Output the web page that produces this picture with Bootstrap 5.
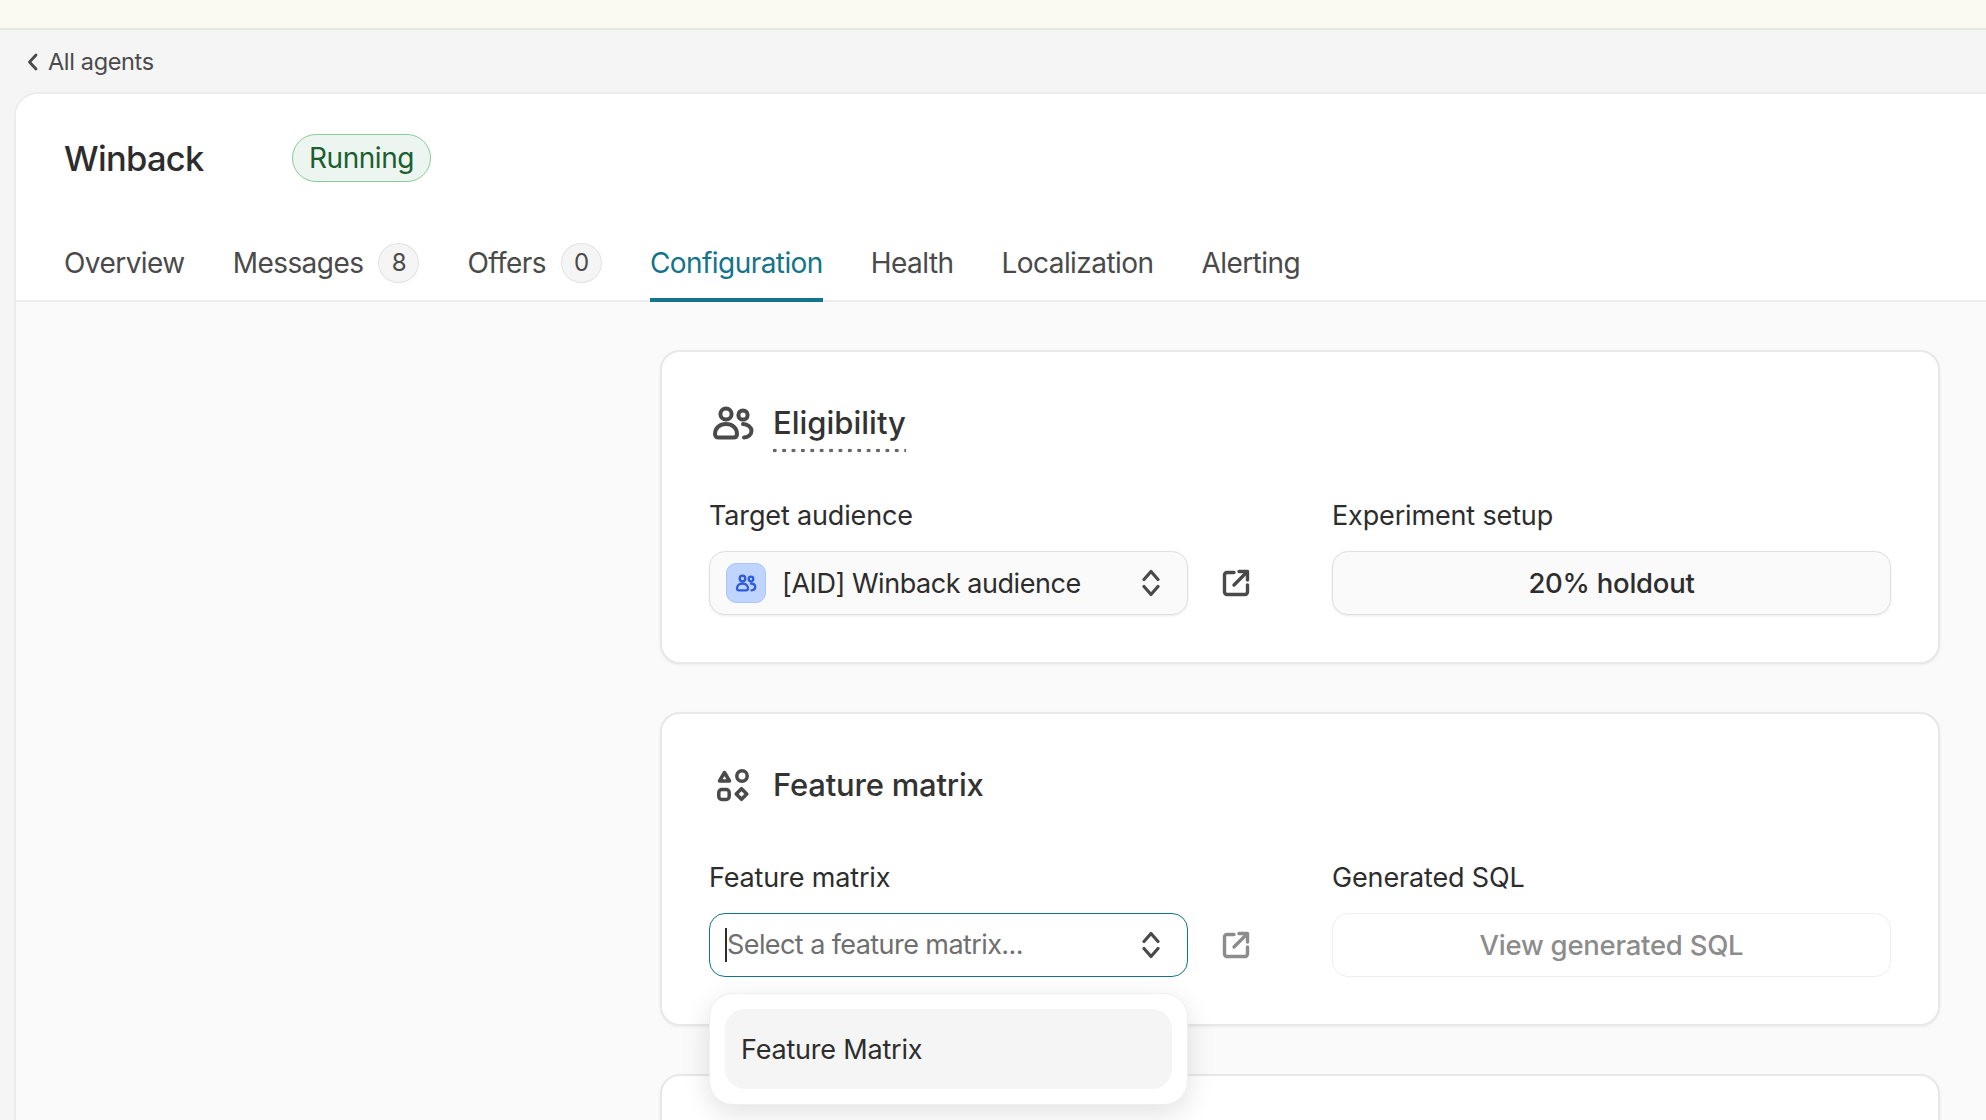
<!DOCTYPE html>
<html lang="en">
    <head>
        <meta charset="UTF-8">
        <meta name="viewport" content="width=device-width, initial-scale=1.0">
        <title>Winback</title>
        <link href="https://cdn.jsdelivr.net/npm/bootstrap@5.3.3/dist/css/bootstrap.min.css" rel="stylesheet">
        <style>
            body {
                height: 1120px;
                overflow: hidden;
                background-color: #f5f5f5;
                font-family: Inter, "Liberation Sans", sans-serif;
                font-size: 26px;
                color: #2d2d2d;
            }
            .top-strip {
                height: 30px;
                background-color: #fafaf2;
                border-bottom: 2px solid #e5e6dc;
            }
            .back-row {
                height: 62px;
                padding-left: 27px;
                padding-top: 2px;
                gap: 10px;
                font-size: 23.5px;
                letter-spacing: -0.35px;
                color: #4a4a4a;
            }
            .agent-panel {
                margin-left: 14px;
                height: 1040px;
                background-color: #fafafa;
                border: 2px solid #ececec;
                border-right: 0;
                border-bottom: 0;
                border-radius: 24px 0 0 0;
                overflow: hidden;
            }
            .agent-head {
                background-color: #fff;
                height: 208px;
                padding: 39px 0 0 48px;
                border-bottom: 2px solid #ececec;
            }
            .agent-name {
                width: 228px;
                padding-top: 2px;
                height: 49px;
                font-size: 34.5px;
                font-weight: 500;
                letter-spacing: -0.7px;
                line-height: 48px;
            }
            .state-pill {
                width: 139px;
                height: 48px;
                border: 1.5px solid #86cf9a;
                border-radius: 24px;
                background-color: #edf5f0;
                color: #1b5e30;
                font-size: 28px;
                letter-spacing: -0.45px;
                line-height: 46px;
                text-align: center;
            }
            .agent-tabs {
                margin-top: 40px;
                gap: 48px;
            }
            .agent-tabs .nav-link {
                height: 80px;
                padding: 5px 0 0;
                color: #4a4a4a;
                font-size: 28px;
                letter-spacing: -0.56px;
                border-bottom: 4px solid transparent;
                display: flex;
                align-items: center;
                gap: 15px;
            }
            .agent-tabs .nav-link.active {
                color: #14748c;
                border-bottom-color: #14748c;
            }
            .count-chip {
                width: 41px;
                height: 40px;
                border: 1.5px solid #e2e2e2;
                border-radius: 50%;
                background-color: #f5f5f5;
                font-size: 24px;
                line-height: 37px;
                text-align: center;
                color: #4a4a4a;
            }
            .config-body {
                padding: 48px 46px 0 644px;
            }
            .section-box {
                height: 314px;
                margin-bottom: 48px;
                padding: 42px 47px 0;
                border: 2px solid #e8e8e8;
                border-radius: 20px;
                box-shadow: 0 1px 3px rgba(0, 0, 0, .06);
            }
            .section-title {
                height: 58px;
                gap: 19px;
                font-size: 31px;
                font-weight: 500;
                letter-spacing: -0.2px;
                color: #333;
            }
            .section-title svg {
                flex: none;
                margin-left: 1px;
            }
            .dotted-word {
                padding-bottom: 7px;
                margin-top: 7px;
                letter-spacing: 0;
                background-image: radial-gradient(circle, #666 1.7px, transparent 2.1px);
                background-size: 9.4px 5px;
                background-repeat: repeat-x;
                background-position: -3px 100%;
            }
            .field-grid {
                display: grid;
                grid-template-columns: 575px 1fr;
                column-gap: 48px;
                margin-top: 46px;
            }
            .field-label {
                font-size: 27px;
                letter-spacing: -0.15px;
                line-height: 36px;
                margin-bottom: 17px;
                color: #2d2d2d;
            }
            .picker-wrap {
                width: 479px;
                position: relative;
            }
            .picker-box {
                height: 64px;
                padding: 0 16px;
                gap: 16px;
                border: 1.5px solid #e0e0e0;
                border-radius: 16px;
                background-color: #fafafa;
                font-size: 27px;
                letter-spacing: -0.45px;
                box-shadow: 0 1px 3px rgba(0, 0, 0, .08);
            }
            .picker-text {
                padding-top: 2px;
            }
            .picker-box.is-focused {
                padding-left: 15px;
                border-color: #14748c;
                background-color: #fff;
                box-shadow: none;
                color: #6f6f6f;
                letter-spacing: -0.58px;
            }
            .text-caret {
                border-left: 2px solid #2d2d2d;
                line-height: 34px;
                white-space: nowrap;
            }
            .audience-tile {
                width: 40px;
                height: 40px;
                flex: none;
                border: 1.5px solid #a9c5fb;
                border-radius: 10px;
                background-color: #bfd5ff;
            }
            .picker-arrows {
                margin-left: auto;
                margin-right: 11px;
                flex: none;
            }
            .open-link {
                margin-left: 34px;
                flex: none;
                color: #4a4a4a;
            }
            .open-link.is-muted {
                color: #8c8c8c;
            }
            .wide-btn {
                height: 64px;
                width: 100%;
                padding-top: 8px;
                border: 1.5px solid #e0e0e0;
                border-radius: 16px;
                background-color: #fafafa;
                font-size: 27.5px;
                font-weight: 500;
                letter-spacing: -0.25px;
                color: #2d2d2d;
                box-shadow: 0 1px 3px rgba(0, 0, 0, .08);
            }
            .wide-btn:disabled {
                border-color: #eeeeee;
                background-color: #fff;
                color: #8c8c8c;
                box-shadow: none;
                opacity: 1;
            }
            .picker-menu {
                position: absolute;
                top: 80px;
                left: 0;
                width: 479px;
                height: 112px;
                padding: 15px;
                border: 1.5px solid #efefef;
                border-radius: 24px;
                background-color: #fff;
                box-shadow: 0 8px 28px rgba(0, 0, 0, .12);
            }
            .picker-menu .dropdown-item {
                height: 80px;
                padding: 2px 16px 0;
                display: flex;
                align-items: center;
                border-radius: 20px;
                background-color: #f5f5f5;
                color: #2d2d2d;
                font-size: 27px;
                letter-spacing: -0.2px;
            }
        </style>
    </head>
    <body>
        <div class="top-strip"></div>
        <div class="back-row d-flex align-items-center">
            <svg width="11" height="18" viewBox="0 0 11 18" fill="none" stroke="#4a4a4a" stroke-width="2.8" stroke-linecap="round" stroke-linejoin="round"><path d="M9 2 2.500 9 9 16"/></svg>
            <span>All agents</span>
        </div>

        <div class="agent-panel">
            <div class="agent-head">
                <div class="d-flex align-items-center">
                    <div class="agent-name">Winback</div>
                    <span class="state-pill">Running</span>
                </div>
                <ul class="nav agent-tabs">
                    <li class="nav-item"><a class="nav-link" href="#">Overview</a></li>
                    <li class="nav-item"><a class="nav-link" href="#">Messages <span class="count-chip">8</span></a></li>
                    <li class="nav-item"><a class="nav-link" href="#">Offers <span class="count-chip">0</span></a></li>
                    <li class="nav-item"><a class="nav-link active" href="#">Configuration</a></li>
                    <li class="nav-item"><a class="nav-link" href="#">Health</a></li>
                    <li class="nav-item"><a class="nav-link" href="#">Localization</a></li>
                    <li class="nav-item"><a class="nav-link" href="#">Alerting</a></li>
                </ul>
            </div>

            <div class="config-body">
                <!-- Eligibility -->
                <div class="section-box bg-white">
                    <div class="section-title d-flex align-items-center">
                        <svg width="44" height="36" viewBox="0 0 44 36" fill="none" stroke="#4a4a4a" stroke-width="4" stroke-linecap="round" stroke-linejoin="round"><circle cx="16" cy="9" r="5.600"/><path d="M5 29c0-6 4.700-10 11-10s11 4 11 10c0 2.400-1.400 3.600-3.600 3.600H8.600C6.400 32.600 5 31.400 5 29z"/><circle cx="33" cy="10" r="4.600"/><path d="M33 19c5 .3 8.500 3.300 8.500 6.800 0 3.700-3.200 6.400-7.500 6.800"/></svg>
                        <span class="dotted-word">Eligibility</span>
                    </div>
                    <div class="field-grid">
                        <div>
                            <div class="field-label">Target audience</div>
                            <div class="d-flex align-items-center">
                                <div class="picker-wrap">
                                    <div class="picker-box d-flex align-items-center">
                                        <span class="audience-tile d-flex align-items-center justify-content-center">
                                            <svg width="22" height="18" viewBox="0 0 44 36" fill="none" stroke="#2f5bdc" stroke-width="4.600" stroke-linecap="round" stroke-linejoin="round"><circle cx="15" cy="9" r="5.600"/><path d="M4 29c0-6 4.700-10 11-10s11 4 11 10c0 2.400-1.400 3.600-3.600 3.600H7.600C5.400 32.600 4 31.400 4 29z"/><circle cx="32" cy="10" r="4.600"/><path d="M32 19c5 .3 8.500 3.300 8.500 6.800 0 3.700-3.200 6.400-7.500 6.800"/></svg>
                                        </span>
                                        <span class="picker-text">[AID] Winback audience</span>
                                        <svg class="picker-arrows" width="18" height="28" viewBox="0 0 18 28" fill="none" stroke="#4a4a4a" stroke-width="3.200" stroke-linecap="round" stroke-linejoin="round"><path d="M2 10.500 9 2.500l7 8"/><path d="M2 17.500l7 8 7-8"/></svg>
                                    </div>
                                </div>
                                <svg class="open-link" width="28" height="28" viewBox="0 0 28 28" fill="none" stroke="currentColor" stroke-width="3.400" stroke-linecap="round" stroke-linejoin="round"><path d="M12 3.500H5A2.500 2.500 0 0 0 2.500 6v17A2.500 2.500 0 0 0 5 25.500h18a2.500 2.500 0 0 0 2.500-2.500v-7"/><path d="M17 2.500h8.500V11"/><path d="M25 3 12 16"/></svg>
                            </div>
                        </div>
                        <div>
                            <div class="field-label">Experiment setup</div>
                            <button type="button" class="btn wide-btn">20% holdout</button>
                        </div>
                    </div>
                </div>

                <!-- Feature matrix -->
                <div class="section-box bg-white">
                    <div class="section-title d-flex align-items-center">
                        <svg width="44" height="36" viewBox="0 0 44 36" fill="none" stroke="#4a4a4a" stroke-width="3.500" stroke-linecap="round" stroke-linejoin="round"><path d="M14.500 5.500 19.500 14H9.500z"/><circle cx="32" cy="9" r="5.200"/><rect x="8.800" y="22.500" width="10.400" height="10" rx="3"/><path d="M31.500 21.700l5.300 5.300-5.300 5.300-5.300-5.300z"/></svg>
                        <span>Feature matrix</span>
                    </div>
                    <div class="field-grid">
                        <div>
                            <div class="field-label">Feature matrix</div>
                            <div class="d-flex align-items-center">
                                <div class="picker-wrap">
                                    <div class="picker-box is-focused d-flex align-items-center">
                                        <span class="text-caret">Select a feature matrix...</span>
                                        <svg class="picker-arrows" width="18" height="28" viewBox="0 0 18 28" fill="none" stroke="#4a4a4a" stroke-width="3.200" stroke-linecap="round" stroke-linejoin="round"><path d="M2 10.500 9 2.500l7 8"/><path d="M2 17.500l7 8 7-8"/></svg>
                                    </div>
                                    <div class="picker-menu">
                                        <a class="dropdown-item" href="#">Feature Matrix</a>
                                    </div>
                                </div>
                                <svg class="open-link is-muted" width="28" height="28" viewBox="0 0 28 28" fill="none" stroke="currentColor" stroke-width="3.400" stroke-linecap="round" stroke-linejoin="round"><path d="M12 3.500H5A2.500 2.500 0 0 0 2.500 6v17A2.500 2.500 0 0 0 5 25.500h18a2.500 2.500 0 0 0 2.500-2.500v-7"/><path d="M17 2.500h8.500V11"/><path d="M25 3 12 16"/></svg>
                            </div>
                        </div>
                        <div>
                            <div class="field-label">Generated SQL</div>
                            <button type="button" class="btn wide-btn" disabled>View generated SQL</button>
                        </div>
                    </div>
                </div>

                <div class="section-box bg-white"></div>
            </div>
        </div>
        <script src="https://cdn.jsdelivr.net/npm/bootstrap@5.3.3/dist/js/bootstrap.bundle.min.js"></script>
    </body>
</html>
